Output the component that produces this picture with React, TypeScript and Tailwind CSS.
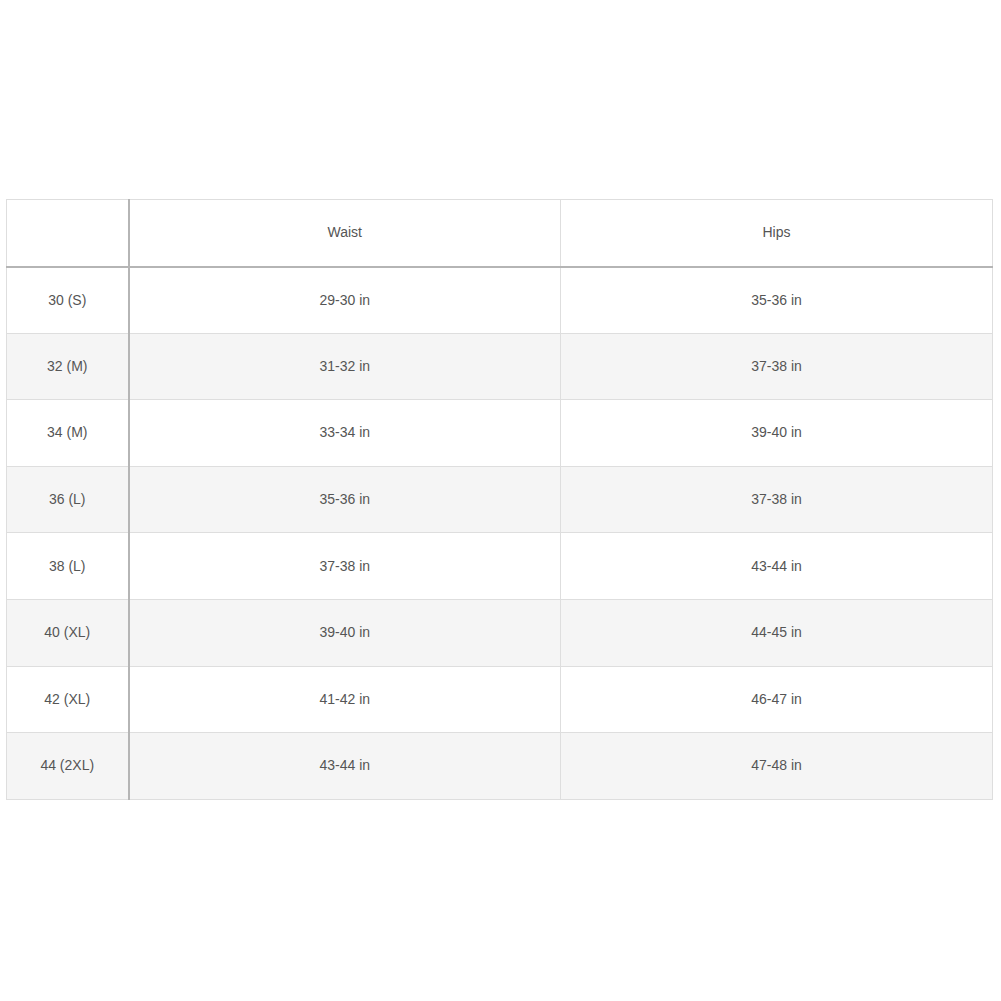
const rows: [string, string, string][] = [
  ["30 (S)", "29-30 in", "35-36 in"],
  ["32 (M)", "31-32 in", "37-38 in"],
  ["34 (M)", "33-34 in", "39-40 in"],
  ["36 (L)", "35-36 in", "37-38 in"],
  ["38 (L)", "37-38 in", "43-44 in"],
  ["40 (XL)", "39-40 in", "44-45 in"],
  ["42 (XL)", "41-42 in", "46-47 in"],
  ["44 (2XL)", "43-44 in", "47-48 in"],
];

export default function App() {
  return (
    <div className="w-[1001px] h-[1001px] bg-white pt-[199px] pl-[6px]" style={{ fontFamily: '"Liberation Sans", Arial, sans-serif' }}>
      <table className="w-[986px] border-collapse text-[14px] text-[#555] table-fixed">
        <colgroup>
          <col className="w-[122px]" />
          <col className="w-[432px]" />
          <col className="w-[432px]" />
        </colgroup>
        <thead>
          <tr className="h-[67px]">
            <th className="border border-[#dedede] border-r-2 border-r-[#b5b5b5] border-b-2 border-b-[#b5b5b5] font-normal"></th>
            <th className="border border-[#dedede] border-b-2 border-b-[#b5b5b5] font-normal">Waist</th>
            <th className="border border-[#dedede] border-b-2 border-b-[#b5b5b5] font-normal">Hips</th>
          </tr>
        </thead>
        <tbody>
          {rows.map((r, i) => (
            <tr key={i} className={`h-[66.6px] ${i % 2 === 1 ? "bg-[#f5f5f5]" : "bg-white"}`}>
              <td className="border border-[#dedede] border-r-2 border-r-[#b5b5b5] text-center">{r[0]}</td>
              <td className="border border-[#dedede] text-center">{r[1]}</td>
              <td className="border border-[#dedede] text-center">{r[2]}</td>
            </tr>
          ))}
        </tbody>
      </table>
    </div>
  );
}
